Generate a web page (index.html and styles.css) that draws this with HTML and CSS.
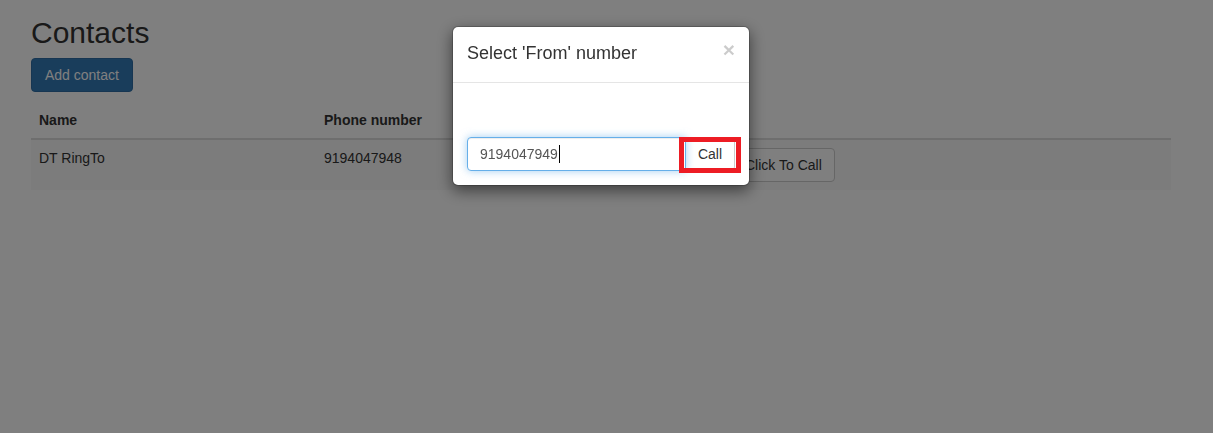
FILE: index.html
```html
<!DOCTYPE html>
<html lang="en">
<head>
<meta charset="utf-8">
<title>Contacts</title>
<link rel="stylesheet" href="styles.css">
</head>
<body>
<div class="container">
  <h1 class="page-title">Contacts</h1>
  <div class="toolbar">
    <button class="btn btn-primary">Add contact</button>
  </div>
  <table class="table">
    <thead>
      <tr>
        <th class="col-name">Name</th>
        <th class="col-phone">Phone number</th>
        <th class="col-actions"></th>
      </tr>
    </thead>
    <tbody>
      <tr>
        <td>DT RingTo</td>
        <td>9194047948</td>
        <td><button class="btn btn-default">Click To Call</button></td>
      </tr>
    </tbody>
  </table>
</div>

<div class="backdrop"></div>

<div class="modal">
  <div class="modal-header">
    <span class="close">&times;</span>
    <h4 class="modal-title">Select 'From' number</h4>
  </div>
  <div class="modal-body">
    <div class="spacer"></div>
    <div class="input-group">
      <div class="form-control focused">9194047949<span class="caret"></span></div>
      <div class="input-group-btn">
        <button class="btn btn-default btn-call">Call</button>
        <span class="highlight"></span>
      </div>
    </div>
  </div>
</div>
</body>
</html>
```

FILE: styles.css
```css
* { box-sizing: border-box; }

html, body {
  margin: 0;
  padding: 0;
  background: #fff;
}

body {
  font-family: "Liberation Sans", Arial, sans-serif;
  font-size: 14px;
  line-height: 1.42857;
  color: #333;
  height: 433px;
  overflow: hidden;
}

.container {
  margin-left: 31px;
  width: 1140px;
}

.page-title {
  font-size: 30px;
  font-weight: 500;
  line-height: 1.1;
  margin: 16px 0 9px;
}

.toolbar {
  display: flex;
  margin-bottom: 10px;
}

.btn {
  font-family: inherit;
  font-size: 14px;
  line-height: 20px;
  padding: 6px 12px;
  border: 1px solid transparent;
  border-radius: 4px;
  cursor: pointer;
}

.btn-primary {
  background: #337ab7;
  border-color: #2e6da4;
  color: #fff;
  padding: 6px 13px;
}

.btn-default {
  background: #fff;
  border-color: #ccc;
  color: #333;
}

.table {
  width: 100%;
  border-collapse: collapse;
  border-spacing: 0;
}

.table th,
.table td {
  padding: 8px;
  text-align: left;
  vertical-align: top;
  line-height: 20px;
}

.table thead th {
  font-weight: bold;
  border-bottom: 2px solid #ddd;
}

.table tbody tr {
  background: #f9f9f9;
}

.col-name { width: 285px; }
.col-phone { width: 408px; }

.backdrop {
  position: fixed;
  inset: 0;
  background: rgba(0, 0, 0, 0.5);
}

.modal {
  position: fixed;
  left: 452px;
  top: 26px;
  width: 298px;
  background: #fff;
  border: 1px solid rgba(0, 0, 0, 0.2);
  border-radius: 6px;
  box-shadow: 0 5px 15px rgba(0, 0, 0, 0.5);
  background-clip: padding-box;
}

.modal-header {
  padding: 14px 14px 15px;
  border-bottom: 1px solid #e5e5e5;
  display: flex;
  flex-direction: row-reverse;
  justify-content: space-between;
  align-items: flex-start;
}

.modal-title {
  margin: 0;
  font-size: 18px;
  font-weight: 500;
  line-height: 1.42857;
}

.close {
  font-size: 21px;
  font-weight: bold;
  line-height: 1;
  color: #000;
  opacity: 0.2;
  margin-top: -2px;
}

.modal-body {
  padding: 14px;
}

.spacer {
  height: 40px;
}

.input-group {
  display: flex;
}

.form-control {
  flex: 1;
  height: 34px;
  padding: 6px 12px;
  font-size: 14px;
  line-height: 20px;
  color: #555;
  background: #fff;
  border: 1px solid #ccc;
  border-radius: 4px 0 0 4px;
  display: flex;
  align-items: center;
}

.form-control.focused {
  border-color: #66afe9;
  box-shadow: inset 0 1px 1px rgba(0, 0, 0, 0.075), 0 0 8px rgba(102, 175, 233, 0.6);
  position: relative;
  z-index: 1;
}

.caret {
  display: inline-block;
  width: 1px;
  height: 18px;
  background: #000;
  margin-left: 1px;
}

.input-group-btn {
  position: relative;
  display: flex;
}

.btn-call {
  margin-left: -1px;
  height: 34px;
  border-radius: 0 4px 4px 0;
}

.highlight {
  position: absolute;
  left: -7px;
  right: -6px;
  top: 0;
  bottom: -2px;
  border: 5px solid #ed1c24;
  z-index: 2;
  pointer-events: none;
}
```
